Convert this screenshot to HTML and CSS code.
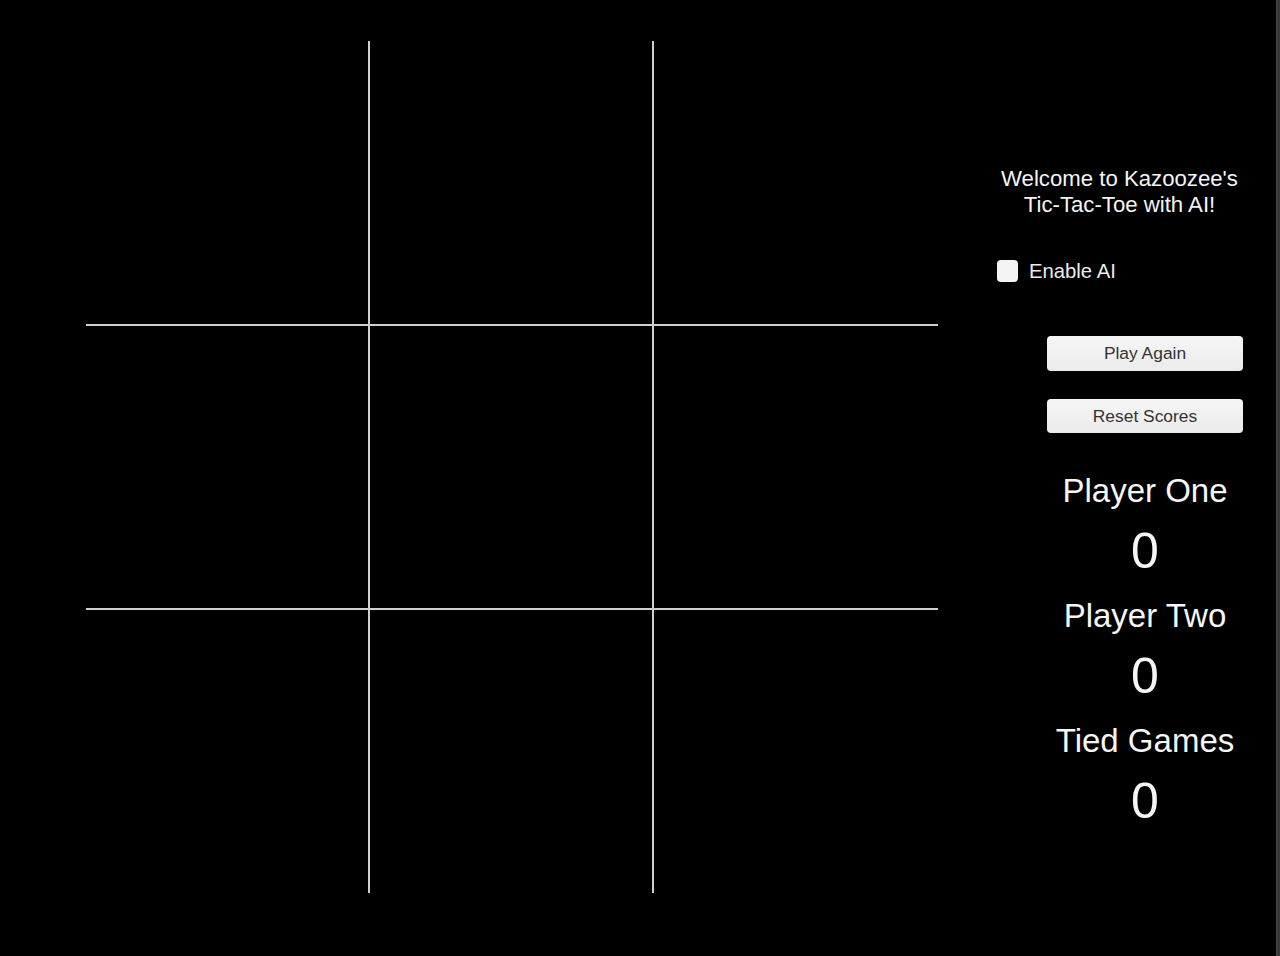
FILE: index.html
```html
<!DOCTYPE html>
<html lang="en">
<head>
<meta charset="utf-8">
<title>Tic-Tac-Toe with AI</title>
<link rel="stylesheet" href="styles.css">
</head>
<body>
<div class="app">
  <div class="board">
    <div class="cell"></div><div class="cell"></div><div class="cell"></div>
    <div class="cell"></div><div class="cell"></div><div class="cell"></div>
    <div class="cell"></div><div class="cell"></div><div class="cell"></div>
  </div>
  <div class="panel">
    <div class="title">Welcome to Kazoozee's<br>Tic-Tac-Toe with AI!</div>
    <label class="toggle"><input type="checkbox" class="check"><span>Enable AI</span></label>
    <button class="btn btn-play">Play Again</button>
    <button class="btn btn-reset">Reset Scores</button>
    <div class="scores">
      <div class="score">
        <div class="score-label">Player One</div>
        <div class="score-value">0</div>
      </div>
      <div class="score">
        <div class="score-label">Player Two</div>
        <div class="score-value">0</div>
      </div>
      <div class="score">
        <div class="score-label">Tied Games</div>
        <div class="score-value">0</div>
      </div>
    </div>
  </div>
  <div class="edge"></div>
</div>
</body>
</html>
```
FILE: styles.css
```css
html, body {
  margin: 0;
  padding: 0;
  background: #000;
  height: 956px;
  overflow: hidden;
  font-family: "Liberation Sans", Arial, sans-serif;
  color: #f2f2f2;
}

.app {
  display: flex;
  height: 956px;
}

.board {
  margin: 41px 0 0 86px;
  width: 852px;
  height: 852px;
  display: grid;
  grid-template-columns: 282px 282px 1fr;
  grid-template-rows: repeat(3, 1fr);
  gap: 2px;
  background: #cfcfcf;
  flex: none;
}

.cell {
  background: #000;
}

.panel {
  margin-left: 59px;
  width: 245px;
  padding-top: 166px;
  display: flex;
  flex-direction: column;
  flex: none;
}

.title {
  font-size: 22.2px;
  line-height: 26px;
  text-align: center;
  color: #f4f4f4;
}

.toggle {
  margin-top: 42px;
  display: flex;
  align-items: center;
  height: 22px;
  gap: 11px;
  font-size: 20.3px;
  color: #ececec;
}

.check {
  appearance: none;
  -webkit-appearance: none;
  margin: 0;
  width: 21px;
  height: 22px;
  border-radius: 4px;
  background: #f4f4f4;
}

.btn {
  margin-left: 50px;
  width: 196px;
  border: none;
  border-radius: 4px;
  background: linear-gradient(#f6f6f6, #ebebeb);
  color: #333;
  font-family: "Liberation Sans", Arial, sans-serif;
  font-size: 17.4px;
  padding: 0;
}

.btn-play {
  margin-top: 54px;
  height: 35px;
}

.btn-reset {
  margin-top: 28px;
  height: 34px;
}

.scores {
  margin-left: 50px;
  width: 196px;
  margin-top: 40px;
  display: flex;
  flex-direction: column;
  gap: 19px;
  text-align: center;
}

.score {
  display: flex;
  flex-direction: column;
  gap: 14px;
}

.score-label {
  font-size: 33px;
  line-height: 36px;
  white-space: nowrap;
  color: #f6f6f6;
}

.score-value {
  font-size: 50px;
  line-height: 56px;
  color: #f6f6f6;
}

.edge {
  margin-left: auto;
  width: 3px;
  background: #373737;
  border-left: 1px solid #484848;
}
```
